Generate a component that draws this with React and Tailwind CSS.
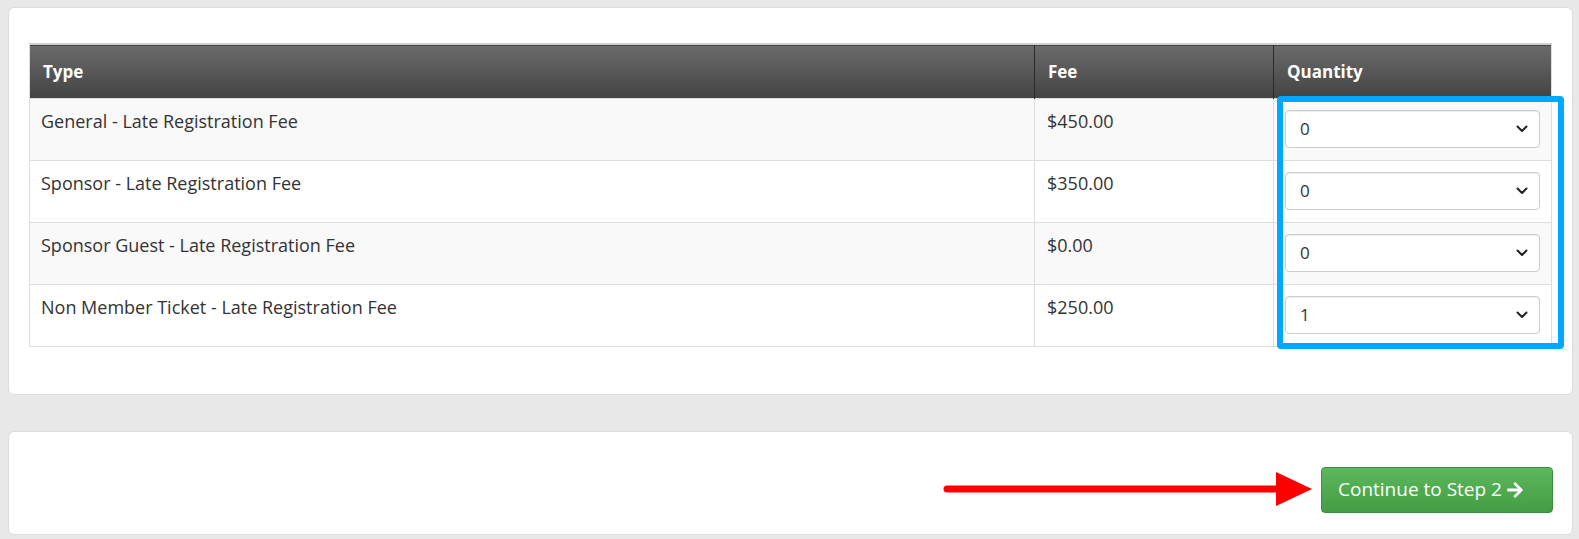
import { FaArrowRight } from 'react-icons/fa'

const tickets = [
  { type: 'General - Late Registration Fee', fee: '$450.00', qty: '0' },
  { type: 'Sponsor - Late Registration Fee', fee: '$350.00', qty: '0' },
  { type: 'Sponsor Guest - Late Registration Fee', fee: '$0.00', qty: '0' },
  { type: 'Non Member Ticket - Late Registration Fee', fee: '$250.00', qty: '1' },
]

function QuantitySelect({ value }) {
  return (
    <div className="relative">
      <select
        className="h-[38px] w-full appearance-none rounded-[4px] border border-[#cccccc] bg-white pl-[14px] text-[17px] text-[#333] shadow-[inset_0_1px_1px_rgba(0,0,0,0.075)]"
        defaultValue={value}
      >
        {[0, 1, 2, 3, 4, 5].map((n) => (
          <option key={n} value={String(n)}>
            {n}
          </option>
        ))}
      </select>
      <svg
        className="pointer-events-none absolute right-[12px] top-[15px]"
        width="12"
        height="8"
        viewBox="0 0 12 8"
        fill="none"
      >
        <path d="M1.5 1.5l4.5 4.5 4.5-4.5" stroke="#222" strokeWidth="2" strokeLinecap="round" strokeLinejoin="round" />
      </svg>
    </div>
  )
}

function App() {
  return (
    <div
      className="min-h-[539px] bg-[#e8e8e8] pl-[8px] pr-[6px] pt-[7px] text-[#333]"
      style={{ fontFamily: '"Open Sans", "Noto Sans", sans-serif' }}
    >
      <section className="rounded-[6px] border border-[#dcdcdc] bg-white px-[20px] pb-[47px] pt-[35px]">
        <div className="relative">
          <table className="w-full border-collapse border border-[#dddddd] text-[18px]">
            <thead>
              <tr className="h-[54px] border-t-2 border-[#cfcfcf] bg-[linear-gradient(to_bottom,#6b6b6b,#434343)] text-left text-[17px] text-white">
                <th className="px-[13px] font-bold">Type</th>
                <th className="w-[239px] border-l border-[#2a2a2a] px-[13px] font-bold">Fee</th>
                <th className="w-[278px] border-l border-[#2a2a2a] px-[13px] font-bold">Quantity</th>
              </tr>
            </thead>
            <tbody>
              {tickets.map((t, i) => (
                <tr
                  className={`h-[62px] border-t border-[#dddddd] align-top ${i % 2 === 0 ? 'bg-[#f9f9f9]' : 'bg-white'}`}
                  key={t.type}
                >
                  <td className="px-[11px] pt-[10px] leading-[24px]">{t.type}</td>
                  <td className="border-l border-[#dddddd] px-[12px] pt-[10px] leading-[24px]">{t.fee}</td>
                  <td className="border-l border-[#dddddd] px-[11px] pt-[11px]">
                    <QuantitySelect value={t.qty} />
                  </td>
                </tr>
              ))}
            </tbody>
          </table>
          <div className="pointer-events-none absolute left-[1248px] top-[53px] h-[253px] w-[287px] rounded-[4px] border-[6px] border-[#00a8ff]" />
        </div>
      </section>

      <section className="mt-[36px] flex items-center justify-end gap-[8px] rounded-[6px] border border-[#dcdcdc] bg-white pb-[21px] pr-[19px] pt-[35px]">
        <svg width="370" height="40" viewBox="0 0 370 40" className="mt-[-2px]">
          <line x1="4" y1="20" x2="340" y2="20" stroke="#ff0000" strokeWidth="7" strokeLinecap="round" />
          <polygon points="333,3 369,20 333,37" fill="#ff0000" />
        </svg>
        <button
          className="flex h-[46px] w-[232px] items-center rounded-[4px] border border-[#3d8b3d] bg-[linear-gradient(to_bottom,#5cb85c,#449d44)] pl-[16px] text-[19px] text-white"
          type="button"
        >
          Continue to Step 2
          <FaArrowRight className="ml-[4px] text-[18px]" />
        </button>
      </section>
    </div>
  )
}

export default App
